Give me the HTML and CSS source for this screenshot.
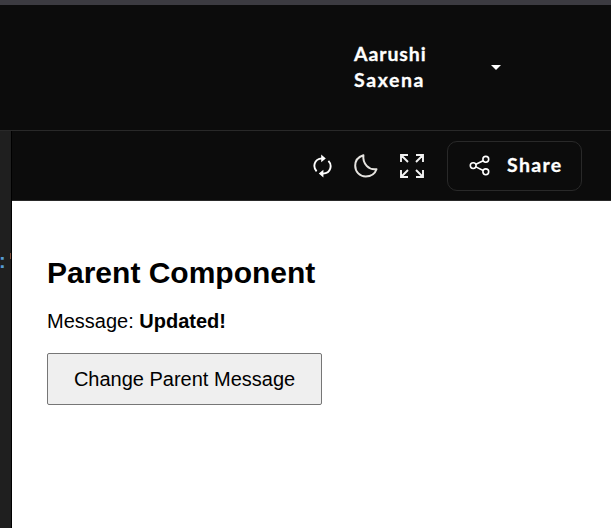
FILE: index.html
```html
<!DOCTYPE html>
<html lang="en">
<head>
<meta charset="utf-8">
<title>Parent Component</title>
<link rel="stylesheet" href="styles.css">
</head>
<body>
<header class="header">
  <div class="user"><span class="first">Aarushi</span><br><span class="last">Saxena</span></div>
  <svg class="caret" width="10" height="5" viewBox="0 0 10 5"><path d="M0 0h10L5 5z" fill="#fff"/></svg>
</header>
<main class="workspace">
  <aside class="editor"><span class="code">:</span><span class="quote"></span></aside>
  <section class="preview">
    <div class="toolbar">
      <svg class="refresh" width="20" height="24" viewBox="0 0 20 24" fill="none" stroke="#fff" stroke-width="1.9">
        <path d="M4.6 17.4C.8 13.4 1.6 4.9 10 4.4M16.4 6.8C20.2 10.6 19.4 19.1 11 19.6"/>
        <path d="M9.2.6 13.8 4.5 9.2 8.2zM11.4 15.8 6.8 19.5 11.4 23.4z" fill="#fff" stroke="none"/>
      </svg>
      <svg class="moon" width="24" height="24" viewBox="0 0 24 24" fill="none" stroke="#e6e4e0" stroke-width="2" stroke-linejoin="round">
        <path d="M9.4 1.2C4.2 2.8 1.2 6.8 1.2 11.8c0 6 4.6 10.6 10.5 10.6 5.1 0 9.3-2.8 10.8-7.2C14.8 16.4 8.4 9.8 9.4 1.2z"/>
      </svg>
      <svg class="expand" width="24" height="24" viewBox="0 0 24 24" fill="none" stroke="#f2f2f2" stroke-width="1.9">
        <path d="M1 8V1h7M1 1l7 7M16 1h7v7M23 1l-7 7M1 16v7h7M1 23l7-7M16 23h7v-7M23 23l-7-7"/>
      </svg>
      <div class="share">
        <svg width="22" height="22" viewBox="0 0 22 22" fill="none" stroke="#fff" stroke-width="1.6">
          <circle cx="4.2" cy="10.6" r="2.9"/><circle cx="16.8" cy="4.3" r="2.9"/><circle cx="16.8" cy="16.8" r="2.9"/>
          <path d="M6.9 9.3l7.3-3.6M6.9 11.9l7.3 3.6"/>
        </svg>
        <span class="share-label">Share</span>
      </div>
    </div>
    <div class="output">
      <h2>Parent Component</h2>
      <p>Message: <strong>Updated!</strong></p>
      <button type="button">Change Parent Message</button>
    </div>
  </section>
</main>
</body>
</html>
```
FILE: styles.css
```css
* { box-sizing: border-box; }
body {
  margin: 0;
  height: 528px;
  overflow: hidden;
  display: flex;
  flex-direction: column;
  background: #0c0c0c;
  color: #fff;
  font-family: Lato, "Liberation Sans", sans-serif;
}
.header {
  height: 131px;
  flex: none;
  display: flex;
  align-items: center;
  padding: 0 110px 1px 354px;
  border-top: 5px solid #3c3b41;
  border-bottom: 1px solid #292929;
}
.user {
  width: 137px;
  font-size: 19.5px;
  line-height: 26px;
  font-weight: 700;
  -webkit-text-stroke: 0.3px #fff;
}
.first { letter-spacing: 0.9px; }
.last { letter-spacing: 1.6px; }
.caret { flex: none; }
.workspace { flex: 1; display: flex; min-height: 0; }
.editor {
  width: 12px;
  flex: none;
  display: flex;
  justify-content: space-between;
  padding-top: 122px;
  background: #1f1f1f;
  border-right: 1px solid #000;
}
.code {
  margin: -2px 0 0 -1px;
  color: #569cd6;
  font: 700 20px/20px "Liberation Sans", sans-serif;
}
.quote { width: 1px; height: 6px; flex: none; margin: 0 0 0 auto; background: #80533f; }
.preview { flex: 1; min-width: 0; display: flex; flex-direction: column; }
.toolbar {
  height: 70px;
  flex: none;
  display: flex;
  align-items: center;
  padding-left: 300px;
  border-bottom: 1px solid #292929;
}
.toolbar svg { flex: none; }
.moon { margin-left: 22px; }
.expand { margin-left: 22px; }
.share {
  width: 135px;
  height: 50px;
  margin-left: 23px;
  display: flex;
  align-items: center;
  padding-left: 21px;
  border: 1px solid #292929;
  border-radius: 10px;
}
.share-label {
  margin: 0 0 2px 16px;
  font-size: 19.5px;
  font-weight: 700;
  letter-spacing: 1.35px;
  -webkit-text-stroke: 0.3px #fff;
}
.output {
  flex: 1;
  padding: 55px 35px 0;
  background: #fff;
  color: #000;
  font: 20px/23px "Liberation Sans", sans-serif;
}
h2 { margin: 0; font-size: 30px; line-height: 34px; }
p { margin: 20px 0; }
button {
  width: 275px;
  height: 52px;
  padding: 0;
  border: 1px solid #767676;
  border-radius: 2px;
  background: #efefef;
  color: #000;
  font: 20px "Liberation Sans", sans-serif;
}
```
